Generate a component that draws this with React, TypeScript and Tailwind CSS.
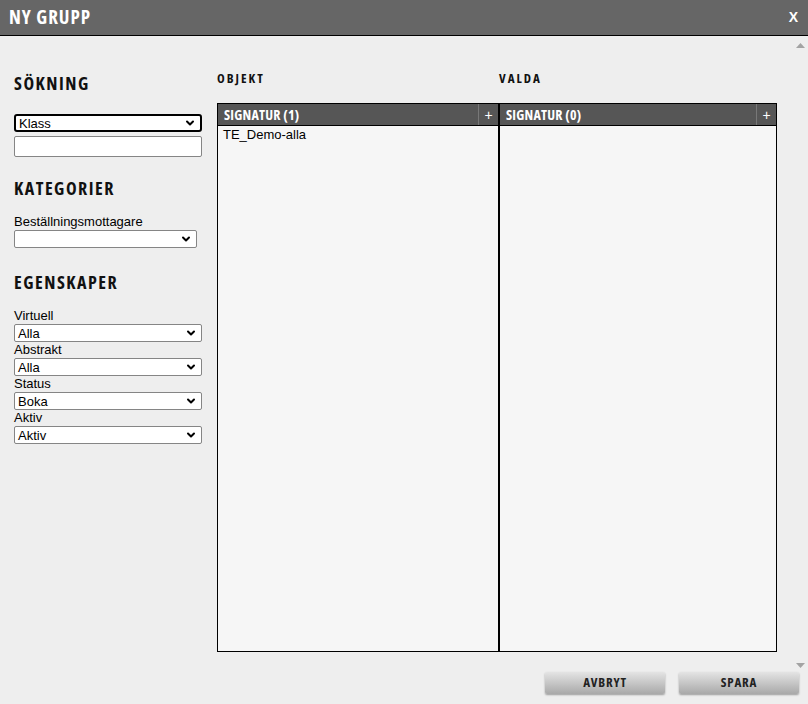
import { ChevronDown } from "lucide-react";

const cond = "font-['Open_Sans',sans-serif] font-bold font-stretch-condensed";
const body = "font-['Liberation_Sans',Arial,sans-serif]";

function Select({ value, width = "w-[188px]", focused = false }: { value: string; width?: string; focused?: boolean }) {
  return (
    <div
      className={
        "flex h-[18px] items-center justify-between bg-white pl-[3px] pr-[4px] text-[13px] text-black " +
        width +
        (focused ? " rounded-[3px] border-2 border-black" : " rounded-[2px] border border-[#858585]")
      }
    >
      <span className="leading-none">{value}</span>
      <ChevronDown className="h-[12px] w-[12px]" strokeWidth={4} />
    </div>
  );
}

function Field({ label, value }: { label: string; value: string }) {
  return (
    <div className="flex flex-col">
      <span className="text-[13px] leading-[16px] text-black">{label}</span>
      <Select value={value} />
    </div>
  );
}

function Panel({ title, width, children }: { title: string; width: string; children?: React.ReactNode }) {
  return (
    <div className={"flex h-[549px] flex-col border border-black bg-[#f6f6f6] " + width}>
      <div className="flex h-[21px] items-stretch bg-[#565656]">
        <span className={cond + " flex-1 pl-[6px] text-[14px] leading-[21px] tracking-[0.2px] text-white"}>{title}</span>
        <span className="flex w-[20px] items-center justify-center border-l border-[#787878] text-[14px] leading-none text-white">
          +
        </span>
      </div>
      <div className="border-t border-black px-[5px] text-[13px] leading-[18px] text-black">{children}</div>
    </div>
  );
}

export default function App() {
  return (
    <div className={body + " flex h-[704px] w-[808px] flex-col bg-[#eeeeee]"}>
      <div className="flex h-[36px] shrink-0 items-center justify-between border-b border-black bg-[#666666] pl-[9px] pr-[10px]">
        <span className={cond + " text-[19px] tracking-[1px] text-white"}>NY GRUPP</span>
        <span className="text-[14px] font-bold text-white">X</span>
      </div>

      <div className="flex min-h-0 flex-1">
        <div className="flex flex-1">
          <div className="flex w-[203px] shrink-0 flex-col pl-[14px] pt-[34px]">
            <h2 className={cond + " text-[18px] leading-[26px] tracking-[1.5px] text-[#111]"}>SÖKNING</h2>
            <div className="mt-[18px] flex flex-col gap-[4px]">
              <Select value="Klass" focused />
              <div className="h-[21px] w-[188px] rounded-[2px] border border-[#858585] bg-white" />
            </div>

            <h2 className={cond + " mt-[18px] text-[18px] leading-[26px] tracking-[1.5px] text-[#111]"}>KATEGORIER</h2>
            <div className="mt-[13px] flex flex-col">
              <span className="text-[13px] leading-[16px] text-black">Beställningsmottagare</span>
              <Select value="" width="w-[183px]" />
            </div>

            <h2 className={cond + " mt-[21px] text-[18px] leading-[26px] tracking-[1.5px] text-[#111]"}>EGENSKAPER</h2>
            <div className="mt-[13px] flex flex-col">
              <Field label="Virtuell" value="Alla" />
              <Field label="Abstrakt" value="Alla" />
              <Field label="Status" value="Boka" />
              <Field label="Aktiv" value="Aktiv" />
            </div>
          </div>

          <div className="flex flex-col pl-[14px] pt-[33px]">
            <div className="flex">
              <span className={cond + " w-[282px] text-[13px] leading-[18px] tracking-[2px] text-[#111]"}>OBJEKT</span>
              <span className={cond + " text-[13px] leading-[18px] tracking-[2px] text-[#111]"}>VALDA</span>
            </div>
            <div className="mt-[16px] flex">
              <Panel title="SIGNATUR (1)" width="w-[282px]">
                TE_Demo-alla
              </Panel>
              <Panel title="SIGNATUR (0)" width="w-[278px]" />
            </div>
          </div>
        </div>

        <div className="flex w-[16px] shrink-0 flex-col items-center justify-between pb-[2px] pt-[7px]">
          <svg width="9" height="5" viewBox="0 0 9 5">
            <path d="M0 5 L4.5 0 L9 5 Z" fill="#a3a3a3" />
          </svg>
          <svg width="9" height="5" viewBox="0 0 9 5">
            <path d="M0 0 L4.5 5 L9 0 Z" fill="#a3a3a3" />
          </svg>
        </div>
      </div>

      <div className="flex h-[34px] shrink-0 justify-end gap-[14px] pr-[9px] pt-[2px]">
        {["AVBRYT", "SPARA"].map((b) => (
          <button
            key={b}
            className={
              cond +
              " h-[22px] w-[120px] rounded-[2px] bg-gradient-to-b from-[#e4e4e4] to-[#a9a9a9] text-[13px] tracking-[0.8px] text-[#222] shadow-[0_1px_2px_rgba(0,0,0,0.35)]"
            }
          >
            {b}
          </button>
        ))}
      </div>
    </div>
  );
}
